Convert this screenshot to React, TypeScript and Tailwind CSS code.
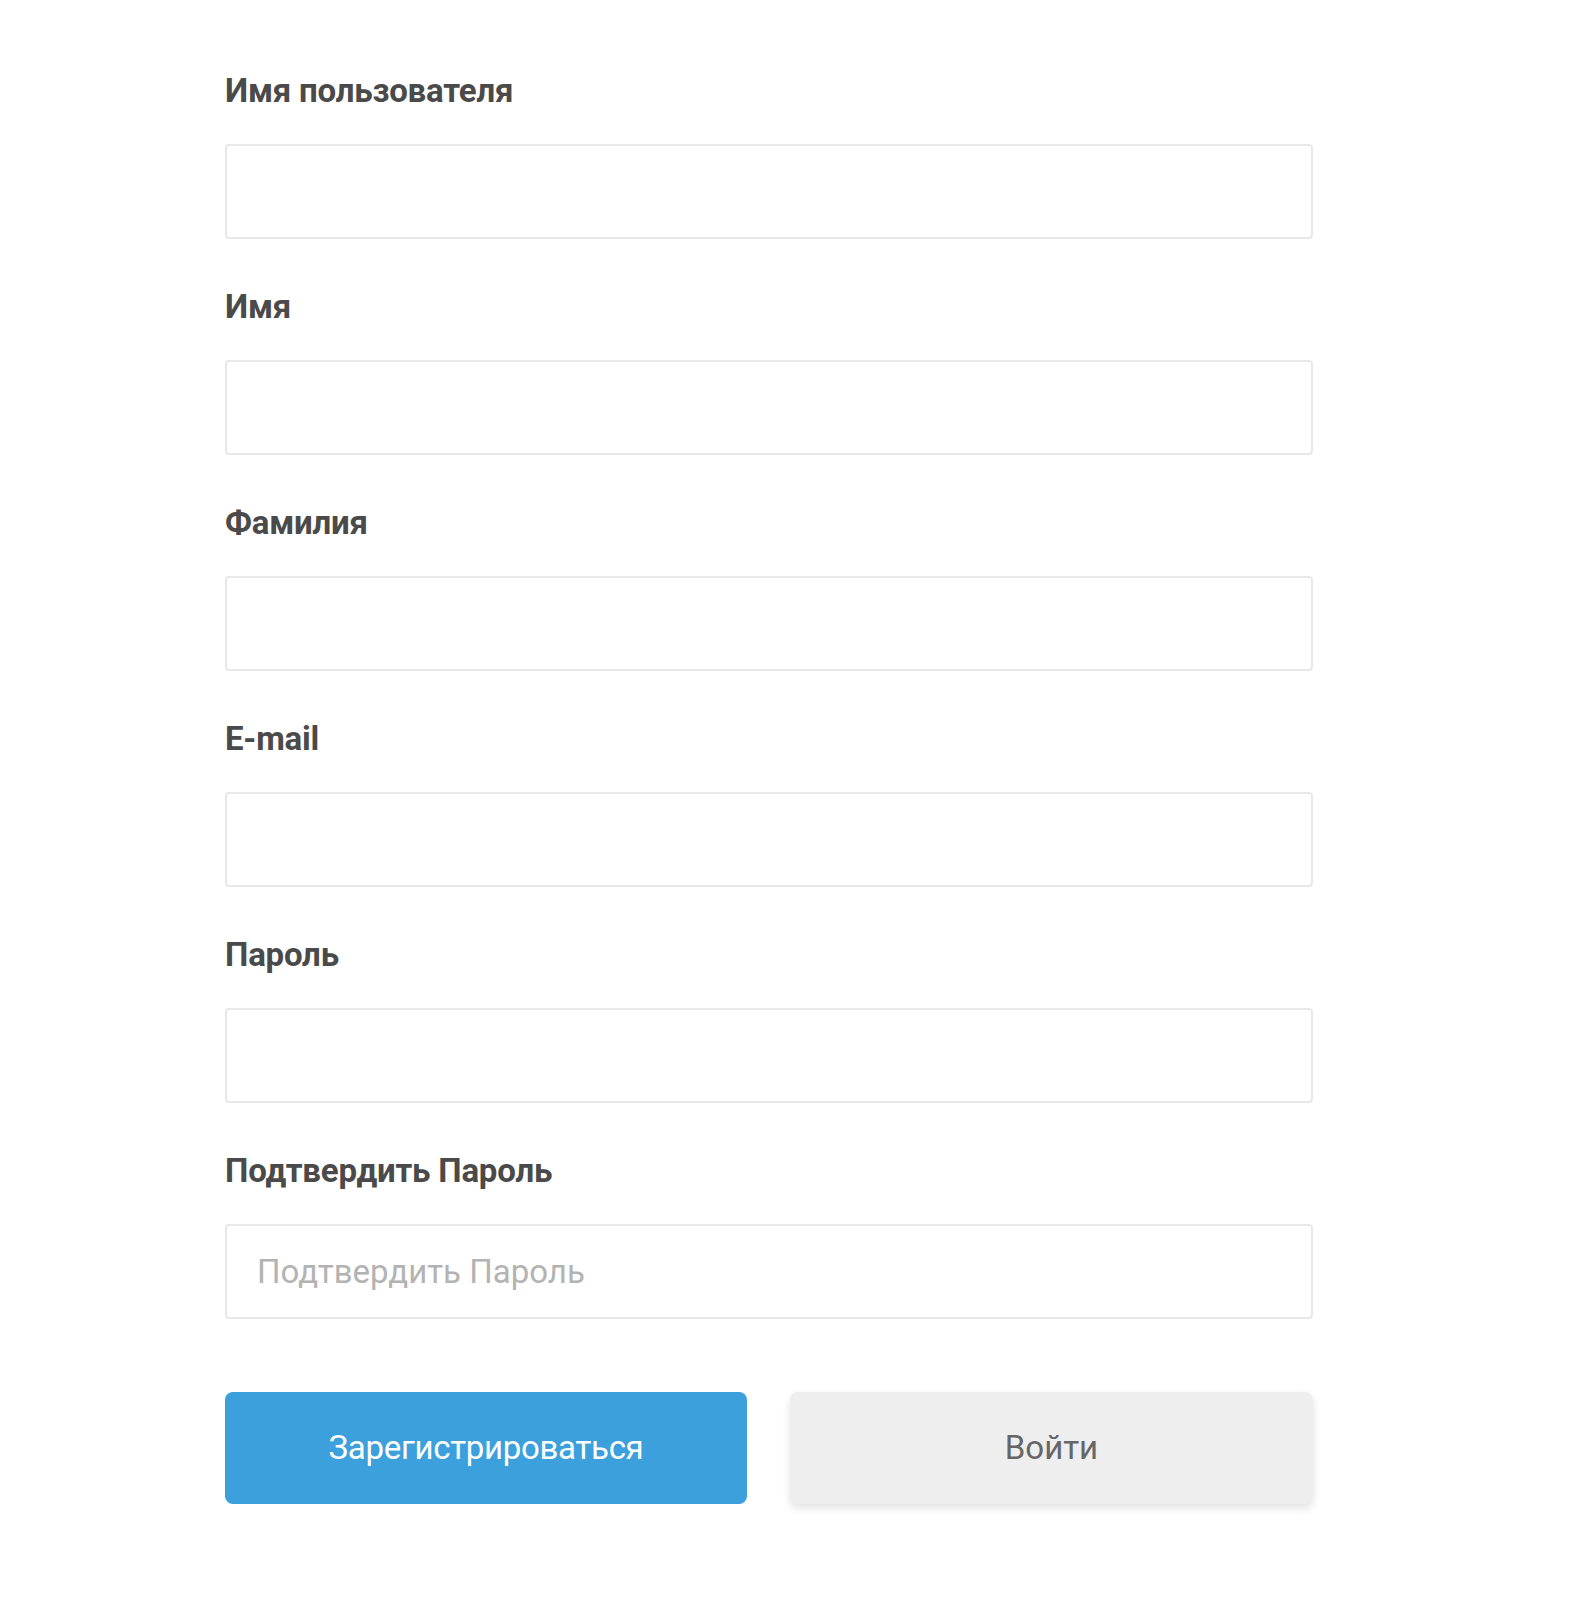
import React from "react";

const fields = [
  { label: "Имя пользователя", placeholder: "" },
  { label: "Имя", placeholder: "" },
  { label: "Фамилия", placeholder: "" },
  { label: "E-mail", placeholder: "" },
  { label: "Пароль", placeholder: "" },
  { label: "Подтвердить Пароль", placeholder: "Подтвердить Пароль" },
];

export default function App() {
  return (
    <div className="min-h-[1600px] bg-white font-['Roboto',sans-serif]">
      <form className="ml-[225px] w-[1088px] pt-[71px]" onSubmit={(e) => e.preventDefault()}>
        {fields.map((f, i) => (
          <div key={i} className="mb-[48px]">
            <label className="block text-[33px] leading-[40px] font-bold tracking-[-0.2px] text-[#4a4a4a]">{f.label}</label>
            <input
              type="text"
              placeholder={f.placeholder}
              className="mt-[33px] block w-full h-[95px] rounded-[4px] border-2 border-[#e8e8e8] bg-white px-[30px] text-[33px] text-[#333] placeholder:text-[#b3b3b3] outline-none"
            />
          </div>
        ))}
        <div className="mt-[73px] flex gap-[43px]">
          <button
            type="submit"
            className="h-[112px] w-[522px] rounded-[8px] bg-[#3ba0db] text-[33px] tracking-[-0.3px] text-white"
          >
            Зарегистрироваться
          </button>
          <button
            type="button"
            className="h-[112px] w-[523px] rounded-[8px] bg-[#eeeeee] text-[33px] text-[#666] shadow-[0_4px_8px_rgba(0,0,0,0.12)]"
          >
            Войти
          </button>
        </div>
      </form>
    </div>
  );
}
